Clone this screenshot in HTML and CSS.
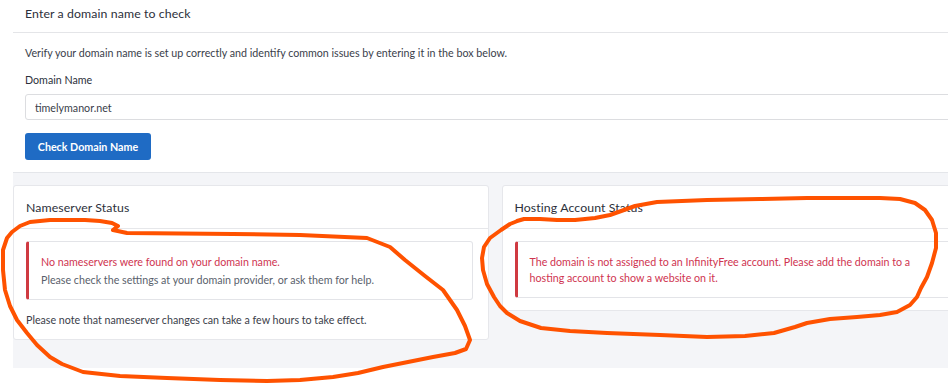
FILE: index.html
```html
<!DOCTYPE html>
<html>
<head>
<meta charset="utf-8">
<link rel="stylesheet" href="styles.css">
</head>
<body>
<div class="page">
  <section class="card top-card">
    <header class="card-header">Enter a domain name to check</header>
    <div class="card-body">
      <p class="intro">Verify your domain name is set up correctly and identify common issues by entering it in the box below.</p>
      <label class="label" for="domain">Domain Name</label>
      <input class="input" id="domain" type="text" value="timelymanor.net">
      <button class="btn">Check Domain Name</button>
    </div>
  </section>
  <div class="status-area">
    <div class="status-row">
      <section class="card status-card">
        <header class="card-header">Nameserver Status</header>
        <div class="card-body">
          <div class="alert">
            <p class="alert-title">No nameservers were found on your domain name.</p>
            <p class="alert-text">Please check the settings at your domain provider, or ask them for help.</p>
          </div>
          <p class="note">Please note that nameserver changes can take a few hours to take effect.</p>
        </div>
      </section>
      <section class="card status-card">
        <header class="card-header">Hosting Account Status</header>
        <div class="card-body">
          <div class="alert">
            <p class="alert-title wrap">The domain is not assigned to an InfinityFree account. Please add the domain to a hosting account to show a website on it.</p>
          </div>
        </div>
      </section>
    </div>
  </div>
</div>
<svg class="scribble" width="948" height="386" viewBox="0 0 948 386" fill="none">
  <path d="M113 230 L127 233 L180 233.5 L233 234 L300 235 L367 238 L390 247 L405 260 L425 276 L443 290 L457 310 L465 326 L470 340 L466 349 L455 353 L433 357 L408 362 L383 367 L358 373 L333 377 L300 380 L267 381 L220 380 L167 378 L120 376 L83 372 L62 364 L50 357 L37 345 L27 333 L17 320 L10 306 L5 290 L3 270 L3 250 L7 238 L12 232 L20 226 L30 222 L50 220 L67 220 L85 220 L100 221 L112 223 L118 226 L113 230"/>
  <path d="M520 220 L510 224 L501 230 L490 238 L484 247 L482 258 L483 270 L487 284 L494 297 L500 306 L507 313 L520 321 L541 328 L570 331 L607 333 L660 335 L707 337 L745 336 L774 333 L795 327 L807 323 L830 319 L857 317 L880 315 L897 312 L910 305 L917 297 L921 288 L927 277 L932 263 L936 248 L936 233 L932 220 L925 210 L915 203 L900 199 L880 198 L850 198 L807 198 L760 199 L707 200 L657 202 L635 206 L624 210 L610 215 L595 218 L575 220 L557 220 L540 219 L524 219 L517 221"/>
</svg>
</body>
</html>
```
FILE: styles.css
```css
html, body {
  margin: 0;
  padding: 0;
  background: #ffffff;
  overflow: hidden;
}
body {
  font-family: "Lato", "Noto Sans", sans-serif;
  font-size: 10.7px;
  color: #3a3e4a;
  width: 948px;
  height: 386px;
  position: relative;
}
p { margin: 0; }

.page {
  margin-left: 13px;
  width: 964px;
}

.card {
  background: #ffffff;
}
.card-header {
  font-size: 12.3px;
  color: #2c303b;
  font-weight: 400;
  letter-spacing: 0.1px;
}

.top-card {
  border-bottom: 1px solid #e4e6ea;
}
.top-card .card-header {
  height: 32px;
  padding: 0 12px 6px;
  box-sizing: border-box;
  height: 33px;
  border-bottom: 1px solid #e4e5e8;
  display: flex;
  align-items: center;
}
.top-card .card-body {
  padding: 13px 12px 12px;
  display: flex;
  flex-direction: column;
  align-items: flex-start;
}
.intro {
  line-height: 14px;
}
.label {
  margin-top: 13px;
  line-height: 14px;
  color: #2c303b;
}
.input {
  margin-top: 7px;
  box-sizing: border-box;
  width: 960px;
  height: 26px;
  border: 1px solid #dcdde0;
  border-radius: 3px;
  padding: 0 9px;
  font-family: inherit;
  font-size: 10.7px;
  color: #3a3e4a;
  background: #fff;
}
.btn {
  margin-top: 13px;
  height: 27px;
  width: 126px;
  border: none;
  border-radius: 3px;
  background: #1f6bc4;
  color: #ffffff;
  font-family: inherit;
  font-size: 10.7px;
  font-weight: 700;
  padding: 0;
}

.status-area {
  background: #f4f5f8;
  padding: 12px 0 28px;
}
.status-row {
  display: flex;
  align-items: flex-start;
  gap: 13px;
}
.status-card {
  flex: 1;
  border: 1px solid #e6e7eb;
  border-radius: 3px;
  box-sizing: border-box;
}
.status-card .card-header {
  height: 42px;
  padding: 0 12px;
  display: flex;
  align-items: center;
  border-bottom: 1px solid #e6e7ea;
}
.status-card .card-body {
  padding: 12px 15px 12px 12px;
}
.alert {
  border: 1px solid #e3e4e8;
  border-left: 3px solid #cf3a41;
  border-radius: 3px;
  padding: 12px 12px 11px;
  background: #fff;
}
.alert-title {
  color: #cf3450;
  line-height: 16px;
}
.alert-title.wrap {
  max-width: 400px;
}
.alert-text {
  color: #5a5f6c;
  line-height: 16px;
  margin-top: 2px;
}
.note {
  margin-top: 13px;
  line-height: 14px;
}

.scribble {
  position: absolute;
  left: 0;
  top: 0;
  pointer-events: none;
}
.scribble path {
  stroke: #ff5200;
  stroke-width: 4;
  stroke-linejoin: round;
  stroke-linecap: round;
}
```
